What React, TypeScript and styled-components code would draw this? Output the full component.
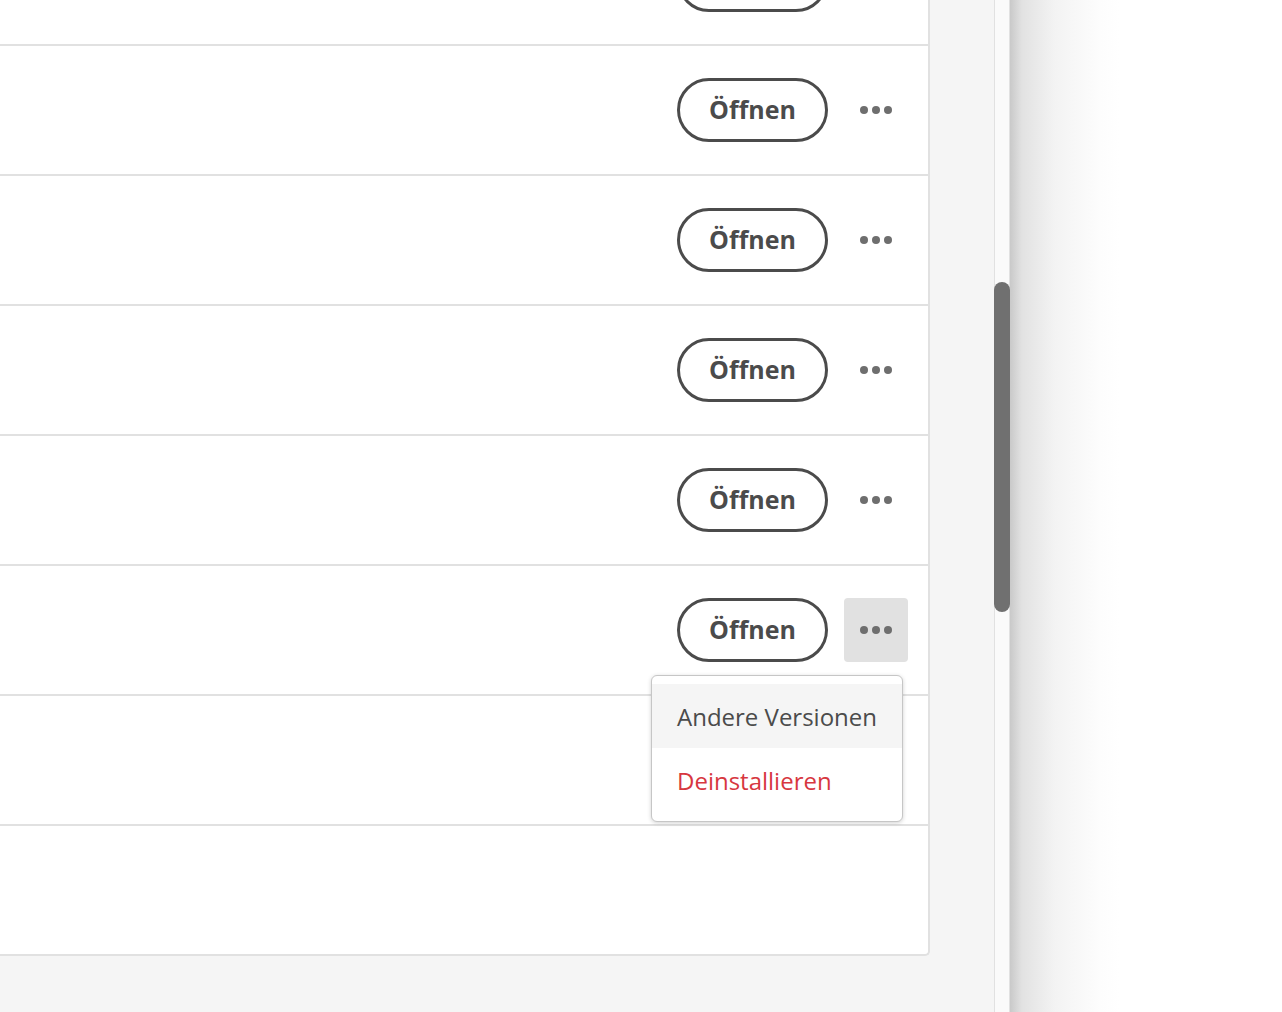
import styled, { createGlobalStyle } from "styled-components";

const GlobalStyle = createGlobalStyle`
  * { box-sizing: border-box; }
  body {
    margin: 0;
    background: #f5f5f5;
    font-family: "Open Sans", "Noto Sans", sans-serif;
    overflow: hidden;
  }
`;

const Shell = styled.div`
  display: flex;
  height: 1012px;
  overflow: hidden;
`;

const Main = styled.div`
  width: 994px;
  flex-shrink: 0;
  background: #f5f5f5;
  overflow: hidden;
`;

const Card = styled.div`
  width: 930px;
  margin-top: -84px;
  background: #fff;
  border-right: 2px solid #e1e1e1;
  border-bottom: 2px solid #e1e1e1;
  border-bottom-right-radius: 5px;
`;

const Row = styled.div`
  height: 130px;
  display: flex;
  align-items: center;
  justify-content: flex-end;
  gap: 16px;
  padding-right: 20px;
  border-bottom: 2px solid #e1e1e1;
  &:last-child {
    height: 128px;
    border-bottom: none;
  }
`;

const OpenButton = styled.button`
  width: 151px;
  height: 64px;
  border: 3px solid #4b4b4b;
  border-radius: 32px;
  background: #fff;
  color: #4b4b4b;
  font-family: "Open Sans", "Noto Sans", sans-serif;
  font-size: 25px;
  font-weight: 700;
  padding: 0 0 2px;
  cursor: pointer;
`;

const MoreWrap = styled.div`
  position: relative;
`;

const MoreButton = styled.button<{ $active?: boolean }>`
  width: 64px;
  height: 64px;
  border: none;
  border-radius: 4px;
  background: ${({ $active }) => ($active ? "#e1e1e1" : "transparent")};
  display: flex;
  align-items: center;
  justify-content: center;
  padding: 0;
  cursor: pointer;
`;

const Menu = styled.div`
  position: absolute;
  top: calc(100% + 13px);
  right: 5px;
  width: 252px;
  padding: 8px 0 9px;
  background: #fff;
  border: 1px solid #c6c6c6;
  border-radius: 6px;
  box-shadow: 0 1px 4px rgba(0, 0, 0, 0.18);
  z-index: 2;
`;

const MenuItem = styled.div<{ $hover?: boolean; $danger?: boolean }>`
  height: 64px;
  display: flex;
  align-items: center;
  padding-left: 25px;
  font-size: 24px;
  color: ${({ $danger }) => ($danger ? "#d7373f" : "#4b4b4b")};
  background: ${({ $hover }) => ($hover ? "#f5f5f5" : "transparent")};
  white-space: nowrap;
`;

const Scrollbar = styled.div`
  width: 16px;
  flex-shrink: 0;
  background: #fafafa;
  border-left: 1px solid #e1e1e1;
  border-right: 1px solid #e1e1e1;
`;

const Thumb = styled.div`
  width: 16px;
  margin-left: -1px;
  background: #707070;
  border-radius: 8px;
`;

const SidePanel = styled.div`
  flex: 1;
  background: linear-gradient(
    to right,
    #c9c9c9 0px,
    #e2e2e2 12px,
    #f3f3f3 45px,
    #fdfdfd 90px,
    #ffffff 110px
  );
`;

function DotsIcon() {
  return (
    <svg width="34" height="10" viewBox="0 0 34 10">
      <circle cx="5" cy="5" r="4" fill="#6e6e6e" />
      <circle cx="17" cy="5" r="4" fill="#6e6e6e" />
      <circle cx="29" cy="5" r="4" fill="#6e6e6e" />
    </svg>
  );
}

interface AppRowProps {
  menuOpen?: boolean;
  empty?: boolean;
}

function AppRow({ menuOpen, empty }: AppRowProps) {
  if (empty) return <Row />;
  return (
    <Row>
      <OpenButton>Öffnen</OpenButton>
      <MoreWrap>
        <MoreButton $active={menuOpen}>
          <DotsIcon />
        </MoreButton>
        {menuOpen && (
          <Menu>
            <MenuItem $hover>Andere Versionen</MenuItem>
            <MenuItem $danger>Deinstallieren</MenuItem>
          </Menu>
        )}
      </MoreWrap>
    </Row>
  );
}

export default function App() {
  const thumb = { top: 282, height: 330 };
  return (
    <>
      <GlobalStyle />
      <Shell>
        <Main>
          <Card>
            <AppRow />
            <AppRow />
            <AppRow />
            <AppRow />
            <AppRow />
            <AppRow menuOpen />
            <AppRow />
            <AppRow empty />
          </Card>
        </Main>
        <Scrollbar>
          <Thumb style={{ marginTop: thumb.top, height: thumb.height }} />
        </Scrollbar>
        <SidePanel />
      </Shell>
    </>
  );
}
